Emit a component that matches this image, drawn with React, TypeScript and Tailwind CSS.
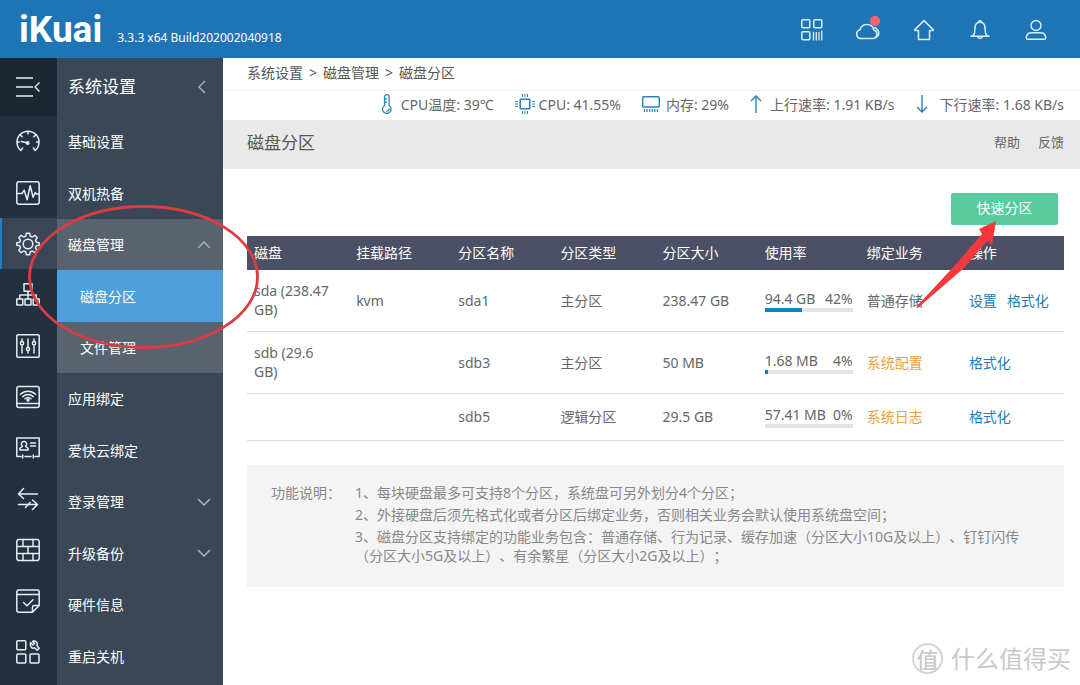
import type { ReactNode } from "react";

function Icon({ children }: { children: ReactNode }) {
  return (
    <svg
      className="size-6 shrink-0"
      viewBox="0 0 24 24"
      fill="none"
      stroke="currentColor"
      strokeWidth="1.5"
      strokeLinecap="round"
      strokeLinejoin="round"
      aria-hidden="true"
    >
      {children}
    </svg>
  );
}

const headerIcons: { label: string; badge?: boolean; art: ReactNode }[] = [
  {
    label: "应用",
    art: (
      <>
        <rect x="1.8" y="1.8" width="8" height="8" rx="1" />
        <rect x="13.8" y="1.8" width="8" height="8" rx="1" />
        <rect x="1.8" y="13.8" width="8" height="8" rx="1" />
        <path strokeWidth="1.3" d="M13.5 14.500v7.500M16.300 14.500v7.500M19 14.500v7.500M21.800 13v9" />
      </>
    ),
  },
  {
    label: "云服务",
    badge: true,
    art: (
      <>
        <path d="M4.5 20.5h12.2a4.3 4.3 0 0 0 1.2-8.4A7.2 7.2 0 0 0 4 11.7a4.5 4.5 0 0 0 .5 8.8z" />
        <path d="M18.500 9.800c1-.2 2 .4 2.300 1.700 2.900 1.800 2.800 6.700-1.300 8" />
      </>
    ),
  },
  {
    label: "首页",
    art: <path d="M12 2.600 2.800 11.600v1h3.700v8.900h11v-8.900h3.700v-1z" />,
  },
  {
    label: "通知",
    art: (
      <>
        <path d="M10.500 4.200a1.500 1.500 0 1 1 3 0" />
        <path d="M3 18.300c2-.4 3.500-2 3.600-4.300l.4-4.600c.3-3 2.300-5.100 5-5.100s4.700 2.100 5 5.100l.4 4.600c.1 2.300 1.600 3.900 3.600 4.300z" />
        <path d="M9.700 18.600a2.400 2.400 0 0 0 4.600 0" />
      </>
    ),
  },
  {
    label: "用户",
    art: (
      <>
        <circle cx="12" cy="7.500" r="5" />
        <path d="M2.300 19.800c0-3.400 2.500-5 5.700-5h8c3.200 0 5.700 1.600 5.700 5 0 .9-.5 1.500-1.400 1.500H3.700c-.9 0-1.400-.6-1.400-1.500z" />
      </>
    ),
  },
];

const gearPath =
  "M10.300 1.200h3.400l.5 2.900 2.100.9 2.500-1.700 2.400 2.400-1.700 2.500.9 2.100 2.800.5v2.400l-2.800.5-.9 2.100 1.700 2.500-2.400 2.400-2.500-1.700-2.100.9-.5 2.900h-3.400l-.5-2.900-2.100-.9-2.500 1.700-2.400-2.400 1.700-2.500-.9-2.100-2.800-.5v-2.400l2.800-.5.9-2.100-1.700-2.500 2.400-2.400L7.700 5l2.100-.9z";

const railItems: { label: string; active?: boolean; art: ReactNode }[] = [
  {
    label: "系统概况",
    art: (
      <>
        <path d="M4.800 20.500 6.600 18M19.200 20.500 17.400 18M4.800 20.500a11 11 0 1 1 14.400 0" />
        <path d="M12 1.500v2.600M4.500 5l1.600 1.700M19.500 5l-1.600 1.700M1.200 12h2.200M22.800 12h-2.200M5.500 11.500l5.200 1.200" />
        <circle cx="11.700" cy="13" r="1.200" fill="currentColor" />
      </>
    ),
  },
  {
    label: "状态监控",
    art: (
      <>
        <rect x="0.800" y="0.800" width="22.400" height="22.400" rx="2.200" />
        <path d="M1.500 12.500H6l2.200-3.300 3 9.500 3-14 2.900 11.500 2.200-4.700 1 1.500h2" />
      </>
    ),
  },
  {
    label: "系统设置",
    active: true,
    art: (
      <>
        <path d={gearPath} />
        <circle cx="12" cy="12" r="4.800" />
      </>
    ),
  },
  {
    label: "网络设置",
    art: (
      <>
        <rect x="8" y="0.800" width="8" height="7.500" />
        <rect x="0.800" y="16" width="6" height="6" />
        <rect x="9" y="16" width="6" height="6" />
        <rect x="17.200" y="16" width="6" height="6" />
        <path d="M12 8.300V16M3.800 16v-4h16.400v4" />
      </>
    ),
  },
  {
    label: "流控分流",
    art: (
      <>
        <rect x="0.800" y="0.800" width="22.400" height="22.400" rx="1" />
        <path d="M6 5v2.500M6 11v8M12 5v8M12 17v2M18 5v2.500M18 11v8" />
        <circle cx="6" cy="9.200" r="1.600" />
        <circle cx="12" cy="15" r="1.600" />
        <circle cx="18" cy="9.200" r="1.600" />
      </>
    ),
  },
  {
    label: "无线服务",
    art: (
      <>
        <rect x="0.800" y="1.500" width="22.400" height="21" rx="2" />
        <path d="M1 18.500h22M4.500 9.200a11 11 0 0 1 15 0M6.800 11.600a7.700 7.700 0 0 1 10.400 0M9 13.700a4.600 4.600 0 0 1 6 0" />
        <circle cx="12" cy="15" r="1" fill="currentColor" />
      </>
    ),
  },
  {
    label: "认证计费",
    art: (
      <>
        <path d="M5 20.500H.8V2h22.400v18.500H19M9 20.500h6M6.700 19v3M17.300 19v3" />
        <path d="M8 5.500a2.500 2.500 0 0 0-1.500 4.600c-.3 1-2.700 1.500-2.700 3v1h8.400v-1c0-1.500-2.400-2-2.700-3A2.500 2.500 0 0 0 8 5.500zM14.500 7h5M14.500 10h5" />
      </>
    ),
  },
  {
    label: "应用工具",
    art: <path d="M21.500 7h-19l5-5.500M2.500 7l5 4.500M2.500 17.500h19l-5-4.500M21.500 17.500l-5 5M9.500 20.500l4.500-5" />,
  },
  {
    label: "安全设置",
    art: (
      <>
        <rect x="0.800" y="1.500" width="22.400" height="21" rx="2.200" />
        <path d="M1 8.500h22M1 15.500h22M7 1.500v7M17 1.500v7M12 8.500v7M7 15.500v7M17 15.500v7" />
      </>
    ),
  },
  {
    label: "行为管控",
    art: (
      <>
        <path d="M23.200 16.500V3a2 2 0 0 0-2-2H2.800a2 2 0 0 0-2 2v18.200a2 2 0 0 0 2 2h13.700zM23.200 16.500h-5a1.700 1.700 0 0 0-1.700 1.700v5M1 5.500h22" />
        <path d="m7.500 13.500 3.500 3.300 6-6" />
      </>
    ),
  },
  {
    label: "高级应用",
    art: (
      <>
        <rect x="0.800" y="0.800" width="9" height="9" rx="1" />
        <rect x="0.800" y="14" width="9" height="9" rx="1" />
        <rect x="14" y="14" width="9" height="9" rx="1" />
        <path d="M14.500 2.500 17 5l1.500-1.500-2-2.300c3.500-.8 5.500 1.600 4.300 4.300l2.400 2.700-2 2-2.700-2.400c-2.500 1.200-4.700-1-4-5.300z" />
      </>
    ),
  },
];

type MenuItem = { label: string; open?: boolean; closed?: boolean; sub?: boolean; active?: boolean };

const menuItems: MenuItem[] = [
  { label: "基础设置" },
  { label: "双机热备" },
  { label: "磁盘管理", open: true },
  { label: "磁盘分区", sub: true, active: true },
  { label: "文件管理", sub: true },
  { label: "应用绑定" },
  { label: "爱快云绑定" },
  { label: "登录管理", closed: true },
  { label: "升级备份", closed: true },
  { label: "硬件信息" },
  { label: "重启关机" },
];

function menuTone(item: MenuItem) {
  if (item.active) return "bg-[#4f9fdb] pl-[23px]";
  if (item.sub) return "bg-[#59626f] pl-[23px]";
  if (item.open) return "bg-[#59626f] pl-[11px]";
  return "pl-[11px]";
}

type Row = {
  disk: string;
  mount: string;
  name: string;
  type: string;
  size: string;
  used: string;
  percent: number;
  service: string;
  system: boolean;
  actions: string[];
};

const rows: Row[] = [
  { disk: "sda (238.47 GB)", mount: "kvm", name: "sda1", type: "主分区", size: "238.47 GB", used: "94.4 GB", percent: 42, service: "普通存储", system: false, actions: ["设置", "格式化"] },
  { disk: "sdb (29.6 GB)", mount: "", name: "sdb3", type: "主分区", size: "50 MB", used: "1.68 MB", percent: 4, service: "系统配置", system: true, actions: ["格式化"] },
  { disk: "", mount: "", name: "sdb5", type: "逻辑分区", size: "29.5 GB", used: "57.41 MB", percent: 0, service: "系统日志", system: true, actions: ["格式化"] },
];

const columns = ["磁盘", "挂载路径", "分区名称", "分区类型", "分区大小", "使用率", "绑定业务", "操作"];

const notes = [
  "1、每块硬盘最多可支持8个分区，系统盘可另外划分4个分区；",
  "2、外接硬盘后须先格式化或者分区后绑定业务，否则相关业务会默认使用系统盘空间；",
  "3、磁盘分区支持绑定的功能业务包含：普通存储、行为记录、缓存加速（分区大小10G及以上）、钉钉闪传（分区大小5G及以上）、有余繁星（分区大小2G及以上）；",
];

function Header() {
  return (
    <header className="flex h-[58px] shrink-0 items-center justify-between bg-[#1e74b4] pr-8 pl-[19px] text-white">
      <div className="flex items-baseline gap-[15px]">
        <h1 className="font-[Roboto,sans-serif] text-[37px] leading-none font-bold">iKuai</h1>
        <span className="text-[12px]">3.3.3 x64 Build202002040918</span>
      </div>
      <nav className="flex gap-8 pt-0.5 text-[#d5f1ff]" aria-label="快捷入口">
        {headerIcons.map((item) => (
          <button key={item.label} type="button" aria-label={item.label} className="relative flex">
            <Icon>{item.art}</Icon>
            {item.badge && <i className="absolute top-[-2px] right-0 size-[10px] rounded-full bg-[#fb6571]" />}
          </button>
        ))}
      </nav>
    </header>
  );
}

function Rail() {
  return (
    <nav className="w-[57px] shrink-0 bg-[#223040] text-[#e6edf3]" aria-label="主菜单">
      <button type="button" aria-label="收起" className="flex h-[58px] w-full items-center justify-center bg-[#1c2733] pr-0.5">
        <svg className="h-5 w-6" viewBox="0 0 24 20" fill="none" stroke="currentColor" strokeWidth="1.400" aria-hidden="true">
          <path d="M0 1h17M0 10h17M0 19h17M23.500 5.500 19 10l4.500 4.500" />
        </svg>
      </button>
      {railItems.map((item) => (
        <button
          key={item.label}
          type="button"
          aria-label={item.label}
          className={
            item.active
              ? "flex h-[51px] w-full items-center justify-center border-l-2 border-[#2180c4] bg-[#3a4655] pr-1"
              : "flex h-[51px] w-full items-center justify-center pr-0.5"
          }
        >
          <Icon>{item.art}</Icon>
        </button>
      ))}
    </nav>
  );
}

function Chevron({ up }: { up?: boolean }) {
  return (
    <svg className="h-2 w-[14px]" viewBox="0 0 14 8" fill="none" stroke="#aab4be" strokeWidth="1.500" aria-hidden="true">
      <path d={up ? "M1 7l6-6 6 6" : "M1 1l6 6 6-6"} />
    </svg>
  );
}

function SideMenu() {
  return (
    <aside className="flex w-[166px] shrink-0 flex-col bg-[#3a4757] pb-[3px] text-white">
      <div className="flex h-[58px] items-center justify-between pr-[17px] pl-[11px]">
        <h2 className="text-[17px]">系统设置</h2>
        <button type="button" aria-label="返回">
          <svg className="h-[14px] w-2" viewBox="0 0 8 14" fill="none" stroke="#aab4be" strokeWidth="1.400" aria-hidden="true">
            <path d="M7 1 1 7l6 6" />
          </svg>
        </button>
      </div>
      <ul className="flex flex-1 flex-col">
        {menuItems.map((item) => (
          <li key={item.label} className="flex min-h-12 flex-1">
            <a href="#" className={`flex flex-1 items-center justify-between pr-3 ${menuTone(item)}`}>
              {item.label}
              {item.open && <Chevron up />}
              {item.closed && <Chevron />}
            </a>
          </li>
        ))}
      </ul>
    </aside>
  );
}

function StatusBar() {
  return (
    <ul className="flex h-[29px] items-center justify-end gap-[21px] pr-4 pb-[3px] whitespace-nowrap">
      <li className="flex items-center gap-2">
        <svg className="h-5 w-3" viewBox="0 0 12 20" fill="none" stroke="#2784b8" strokeWidth="1.300" aria-hidden="true">
          <path d="M3.500 11.500V3a2.300 2.300 0 0 1 4.600 0v8.500a4.300 4.300 0 1 1-4.600 0zM3.500 5h2.300M3.500 8h2.300M8.100 14.500a2.600 2.600 0 0 1-2.600 2.600" />
        </svg>
        CPU温度: 39℃
      </li>
      <li className="flex items-center gap-1">
        <svg className="size-5" viewBox="0 0 20 20" fill="none" stroke="#2784b8" strokeWidth="1.200" aria-hidden="true">
          <rect x="5.200" y="5.200" width="9.600" height="9.600" rx="0.500" strokeWidth="1.500" />
          <path strokeWidth="1" d="M7.500 0v3M10 0v3M12.500 0v3M7.500 17v3M10 17v3M12.500 17v3M0 7.500h3M0 10h3M0 12.500h3M17 7.500h3M17 10h3M17 12.500h3" />
        </svg>
        CPU: 41.55%
      </li>
      <li className="flex items-center gap-1.5">
        <svg className="h-4 w-[18px]" viewBox="0 0 18 16" fill="none" stroke="#2784b8" strokeWidth="1.400" aria-hidden="true">
          <rect x="0.700" y="0.700" width="16.600" height="10.300" rx="1" />
          <path strokeWidth="1.200" d="M2.500 13v3M5 13v3M7.600 13v3M10.200 13v3M12.800 13v3M15.400 13v3" />
        </svg>
        内存: 29%
      </li>
      <li className="flex items-center gap-2">
        <svg className="h-[18px] w-3" viewBox="0 0 12 18" fill="none" stroke="#2784b8" strokeWidth="1.400" aria-hidden="true">
          <path d="M6 18V1M1 6l5-5 5 5" />
        </svg>
        上行速率: 1.91 KB/s
      </li>
      <li className="flex items-center gap-3">
        <svg className="h-[18px] w-3" viewBox="0 0 12 18" fill="none" stroke="#2784b8" strokeWidth="1.400" aria-hidden="true">
          <path d="M6 0v17M1 12l5 5 5-5" />
        </svg>
        下行速率: 1.68 KB/s
      </li>
    </ul>
  );
}

function PartitionTable() {
  return (
    <table className="w-full table-fixed border-separate border-spacing-0 text-left leading-[19px]">
      <thead className="bg-[#4b5066] text-white">
        <tr className="h-[34px]">
          {columns.map((column) => (
            <th key={column} scope="col" className="px-[7px] pb-0.5 font-normal">
              {column}
            </th>
          ))}
        </tr>
      </thead>
      <tbody className="[&_td]:border-b [&_td]:border-[#dddddd] [&_td]:px-[7px] [&_td]:pt-[11px] [&_td]:pb-3">
        {rows.map((row) => (
          <tr key={row.name}>
            <td>
              <div className="pr-2">{row.disk}</div>
            </td>
            <td>{row.mount}</td>
            <td>{row.name}</td>
            <td>{row.type}</td>
            <td>{row.size}</td>
            <td>
              <div className="flex justify-between whitespace-nowrap">
                <span>{row.used}</span>
                <span>{row.percent}%</span>
              </div>
              <div className="h-1 bg-[#e4e4e4]">
                <div className="h-full bg-[#0f81bd]" style={{ width: `${row.percent}%` }} />
              </div>
            </td>
            <td className={row.system ? "text-[#eb9f42]" : ""}>{row.service}</td>
            <td className="whitespace-nowrap text-[#1b7db8]">
              <div className="flex gap-2.5">
                {row.actions.map((action) => (
                  <a key={action} href="#">
                    {action}
                  </a>
                ))}
              </div>
            </td>
          </tr>
        ))}
      </tbody>
    </table>
  );
}

function Annotations() {
  return (
    <>
      <svg className="pointer-events-none absolute top-[204px] left-[27px] h-[146px] w-[234px]" viewBox="0 0 234 146" fill="none" aria-hidden="true">
        <ellipse cx="116.500" cy="73" rx="114" ry="70.500" stroke="#dc3b41" strokeWidth="2.800" />
      </svg>
      <svg className="pointer-events-none absolute top-[220px] right-[82px] h-[90px] w-[84px]" viewBox="0 0 84 90" aria-hidden="true">
        <path d="M82 1 65 9l3 5L44 42 4 85l-1 3 3-2L50 48l23-27 5 4z" fill="#f5383b" />
      </svg>
    </>
  );
}

function Watermark() {
  return (
    <div className="pointer-events-none absolute right-[9px] bottom-[11px] flex items-center gap-2 text-[#c9c9c9]">
      <span className="flex size-[31px] items-center justify-center rounded-full border-2 border-[#d4d4d4] text-[22px] leading-none font-medium">值</span>
      <span className="text-[24px] leading-none">什么值得买</span>
    </div>
  );
}

export default function App() {
  return (
    <div className="relative flex min-h-screen flex-col bg-white font-['Noto_Sans','Noto_Sans_CJK_SC',sans-serif] text-[14px] text-[#666666]">
      <Header />
      <div className="flex flex-1">
        <Rail />
        <SideMenu />
        <main className="min-w-0 flex-1">
          <nav className="flex h-[33px] items-center gap-1.5 border-b border-[#f0f0f0] pb-[3px] pl-6 text-[#555555]" aria-label="面包屑">
            <a href="#">系统设置</a>
            <span>&gt;</span>
            <a href="#">磁盘管理</a>
            <span>&gt;</span>
            <span>磁盘分区</span>
          </nav>
          <StatusBar />
          <div className="flex h-[49px] items-center justify-between bg-[#e9e9e9] pr-4 pb-[3px] pl-6">
            <h2 className="text-[17px] text-[#555555]">磁盘分区</h2>
            <div className="flex gap-[18px] text-[13px]">
              <a href="#">帮助</a>
              <a href="#">反馈</a>
            </div>
          </div>
          <section className="pt-6 pr-4 pl-6">
            <div className="mb-[11px] flex justify-end pr-1.5">
              <button type="button" className="h-8 w-[107px] rounded-xs bg-[#5acb9e] pb-[3px] text-white">
                快速分区
              </button>
            </div>
            <PartitionTable />
            <div className="mt-6 flex gap-3.5 bg-[#f4f4f4] pt-[18px] pr-8 pb-[22px] pl-6 leading-[19px] text-[#888888] [text-spacing-trim:space-all]">
              <h3 className="shrink-0">功能说明：</h3>
              <div className="flex flex-col gap-[3px]">
                {notes.map((note) => (
                  <p key={note}>{note}</p>
                ))}
              </div>
            </div>
          </section>
        </main>
      </div>
      <Annotations />
      <Watermark />
    </div>
  );
}
